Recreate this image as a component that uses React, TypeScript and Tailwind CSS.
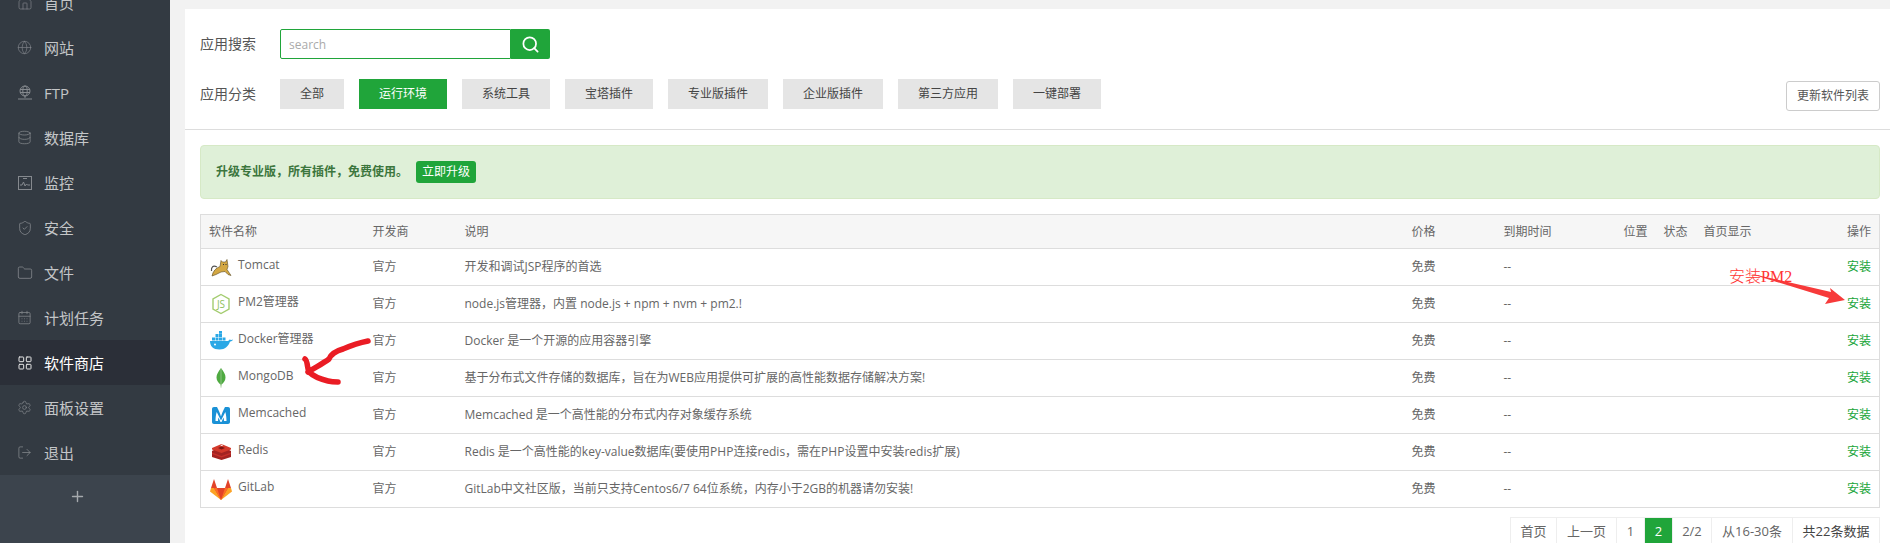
import { Home, Globe, Database, ShieldCheck, Folder, CalendarDays, LayoutGrid, Settings, LogOut, Plus, Search } from 'lucide-react'
import type { ReactNode } from 'react'

const FtpIcon = () => (
    <svg width="16" height="16" viewBox="0 0 16 16" fill="none" stroke="currentColor" strokeWidth="1">
        <circle cx="8" cy="6" r="5" />
        <ellipse cx="8" cy="6" rx="2.2" ry="5" />
        <path d="M3 4.500h10M3 7.500h10M8 11v2M1 14h14" />
    </svg>
)

const MonitorIcon = () => (
    <svg width="16" height="16" viewBox="0 0 16 16" fill="none" stroke="currentColor" strokeWidth="1">
        <rect x="1.500" y="1.500" width="13" height="13" />
        <path d="M3 10h2l1.500-3 1.500 4 1.500-2 1 1H13M6 3.500h4" />
    </svg>
)

const menu: { label: string; icon: ReactNode; active?: boolean }[] = [
    { label: '首页', icon: <Home size={16} strokeWidth={1} /> },
    { label: '网站', icon: <Globe size={15} strokeWidth={1} /> },
    { label: 'FTP', icon: <FtpIcon /> },
    { label: '数据库', icon: <Database size={15} strokeWidth={1.2} /> },
    { label: '监控', icon: <MonitorIcon /> },
    { label: '安全', icon: <ShieldCheck size={16} strokeWidth={1.2} /> },
    { label: '文件', icon: <Folder size={16} strokeWidth={1.2} /> },
    { label: '计划任务', icon: <CalendarDays size={15} strokeWidth={1.2} /> },
    { label: '软件商店', icon: <LayoutGrid size={16} strokeWidth={1.5} />, active: true },
    { label: '面板设置', icon: <Settings size={15} strokeWidth={1.1} /> },
    { label: '退出', icon: <LogOut size={15} strokeWidth={1.2} /> },
]

const categories = [
    { label: '全部' },
    { label: '运行环境', active: true },
    { label: '系统工具' },
    { label: '宝塔插件' },
    { label: '专业版插件' },
    { label: '企业版插件' },
    { label: '第三方应用' },
    { label: '一键部署' },
]

const TomcatLogo = () => (
    <svg width="22" height="22" viewBox="0 0 22 22">
        <path d="M7 11C3 9 1 11 1.500 15" fill="none" stroke="#555" strokeWidth="1.200" />
        <path d="M2 20c1-5 4-8 8-9.500l1-6 1.500 1.500h3L17 3.500l1 7-1 3 4 6-3-1-3-3-4 .5-5 2.500z" fill="#d4a843" stroke="#5a4a22" strokeWidth=".6" />
        <path d="M13 8.500h1M15.500 8.500h1" stroke="#333" strokeWidth="1" />
    </svg>
)

const NodeLogo = () => (
    <svg width="20" height="22" viewBox="0 0 20 22">
        <path d="M10 1.500l8 4.500v10l-8 4.500L2 16V6z" fill="none" stroke="#a3cc6f" strokeWidth="1.400" />
        <text x="10" y="15" textAnchor="middle" fontSize="10" fill="#8fbf5c">JS</text>
    </svg>
)

const DockerLogo = () => (
    <svg width="24" height="20" viewBox="0 0 24 20">
        <path d="M1 10h17c1 0 2-.5 2.500-1.500 1 .5 2.500.5 3.500 0-.5 1.500-2 2-3 2-1.500 4.500-5 8-10.500 8C4 18.500 1 15 1 10z" fill="#2aa8e6" />
        <path d="M3 6.500h3v3H3zM6.500 6.500h3v3h-3zM10 6.500h3v3h-3zM13.500 6.500h3v3h-3zM6.500 3h3v3h-3zM10 3h3v3h-3zM10 0h3v2.700h-3z" fill="#2aa8e6" />
        <circle cx="6" cy="13.500" r="1" fill="#fff" />
    </svg>
)

const MongoLogo = () => (
    <svg width="12" height="22" viewBox="0 0 12 22">
        <path d="M6 1c3 4 4.500 6.500 4.500 9.500S8.500 16 6.500 17.500L6 21l-.5-3.500C3.500 16 1.500 13.500 1.500 10.500S3 5 6 1z" fill="#4faa41" />
        <path d="M6 2v19" stroke="#c9d8c0" strokeWidth=".5" />
    </svg>
)

const MemcachedLogo = () => (
    <svg width="18" height="17" viewBox="0 0 18 17">
        <path d="M2 0h3c1.500 3 3 6 4 9.500C10 6 11.500 3 13 0h3c1.200 0 2 .8 2 2v13c0 1.200-.8 2-2 2H2c-1.200 0-2-.8-2-2V2C0 .8.800 0 2 0z" fill="#1a91d6" />
        <path d="M3.500 14c0-3 .3-6 1.200-9L9 13.500 13.300 5c.9 3 1.200 6 1.200 9h-2.500c0-1.500-.2-2.500-.5-3.500L9.500 15h-1L6.500 10.500c-.3 1-.5 2-.5 3.500z" fill="#fff" />
    </svg>
)

const RedisLogo = () => (
    <svg width="19" height="16" viewBox="0 0 19 16">
        <path d="M9.500 6L19 10v3l-9.500 3L0 13v-3z" fill="#a32422" />
        <path d="M9.500 3.500L19 7v3l-9.500 3.500L0 10V7z" fill="#c6302b" />
        <path d="M9.500 3.500L19 7v1.500L9.500 12 0 8.500V7z" fill="#a32422" />
        <path d="M9.500 0L19 4v1.500L9.500 9 0 5.500V4z" fill="#d33a2c" />
        <path d="M6 4l3.500-1.500L13 4 9.500 5.500z" fill="#7a1512" />
        <path d="M8.500 1l2-.5.500 1-2 .5z" fill="#fff" />
    </svg>
)

const GitLabLogo = () => (
    <svg width="22" height="21" viewBox="0 0 22 21">
        <path d="M11 21L0 12.500 1 9h20l1 3.500z" fill="#fca326" />
        <path d="M11 21L4 9h14z" fill="#e24329" />
        <path d="M11 21L7 9H4z" fill="#fc6d26" />
        <path d="M11 21l4-12h3z" fill="#fc6d26" />
        <path d="M4 0l3 9H1zM18 0l3 9h-6z" fill="#e24329" />
    </svg>
)

const rows = [
    { name: 'Tomcat', logo: <TomcatLogo />, desc: '开发和调试JSP程序的首选' },
    { name: 'PM2管理器', logo: <NodeLogo />, desc: 'node.js管理器，内置 node.js + npm + nvm + pm2.!' },
    { name: 'Docker管理器', logo: <DockerLogo />, desc: 'Docker 是一个开源的应用容器引擎' },
    { name: 'MongoDB', logo: <MongoLogo />, desc: '基于分布式文件存储的数据库，旨在为WEB应用提供可扩展的高性能数据存储解决方案!' },
    { name: 'Memcached', logo: <MemcachedLogo />, desc: 'Memcached 是一个高性能的分布式内存对象缓存系统' },
    { name: 'Redis', logo: <RedisLogo />, desc: 'Redis 是一个高性能的key-value数据库(要使用PHP连接redis，需在PHP设置中安装redis扩展)' },
    { name: 'GitLab', logo: <GitLabLogo />, desc: 'GitLab中文社区版，当前只支持Centos6/7 64位系统，内存小于2GB的机器请勿安装!' },
]

const headers = ['软件名称', '开发商', '说明', '价格', '到期时间', '位置', '状态', '首页显示']

const pager = [
    { label: '首页', w: 'w-[47px]' },
    { label: '上一页', w: 'w-[60px]' },
    { label: '1', w: 'w-[28px]' },
    { label: '2', w: 'w-[28px]', active: true },
    { label: '2/2', w: 'w-[39px]' },
    { label: '从16-30条', w: 'w-[81px]' },
    { label: '共22条数据', w: 'w-[87px]', dark: true },
]

const App = () => {
    return (
        <div className="relative flex h-[543px] w-[1890px] overflow-hidden bg-[#f2f2f2] font-['Open_Sans','Noto_Sans_CJK_SC',sans-serif] text-xs text-[#666]">
            {/* Sidebar */}
            <div className="flex w-[170px] shrink-0 flex-col bg-[#3c444d]">
                <div className="-mt-[20px] bg-[#333a42]">
                    {menu.map((item) => (
                        <div
                            key={item.label}
                            className={`flex h-[45px] items-center pl-[17px] text-[15px] ${item.active ? 'bg-[#2b2f38] text-white' : 'text-[#c4c6c8]'}`}
                        >
                            <span className={`flex w-[27px] shrink-0 ${item.active ? 'text-[#e4e4e4]' : 'text-[#85898e]'}`}>{item.icon}</span>
                            {item.label}
                        </div>
                    ))}
                </div>
                <div className="flex h-[43px] items-center pl-[69px] text-[#a5a9ad]">
                    <Plus size={17} strokeWidth={2} />
                </div>
            </div>

            {/* Main */}
            <div className="flex-1 pl-[15px] pt-[9px]">
                <div className="h-full bg-white">
                    <div className="border-b border-[#ddd] pb-[18px] pl-[15px] pr-[10px] pt-[20px]">
                        <div className="flex h-[30px] items-center">
                            <span className="w-[80px] text-[14px] text-[#555]">应用搜索</span>
                            <div className="flex h-[30px] w-[231px] items-center rounded-l-[2px] border border-[#20a53a] pl-[8px] pt-[1px] text-[#aaa]">search</div>
                            <div className="flex h-[30px] w-[39px] items-center justify-center rounded-r-[2px] bg-[#20a53a] text-white">
                                <Search size={19} strokeWidth={2.2} />
                            </div>
                        </div>
                        <div className="mt-[20px] flex items-start">
                            <span className="flex h-[30px] w-[80px] items-center text-[14px] text-[#555]">应用分类</span>
                            <div className="flex flex-1 gap-[15px]">
                                {categories.map((cat) => (
                                    <div
                                        key={cat.label}
                                        className={`flex h-[30px] items-center px-5 ${cat.active ? 'bg-[#20a53a] text-white' : 'bg-[#e5e5e5] text-[#444]'}`}
                                    >
                                        {cat.label}
                                    </div>
                                ))}
                            </div>
                            <div className="mt-[2px] flex h-[30px] w-[94px] items-center justify-center rounded-[3px] border border-[#ccc] text-[#555]">更新软件列表</div>
                        </div>
                    </div>

                    <div className="pl-[15px] pr-[10px] pt-[15px]">
                        <div className="flex h-[54px] items-center rounded-[4px] border border-[#d6e9c6] bg-[#dff0d8] pl-[15px] font-bold text-[#3c763d]">
                            升级专业版，所有插件，免费使用。
                            <span className="ml-[8px] flex h-[22px] w-[60px] items-center justify-center rounded-[3px] bg-[#20a53a] font-normal text-white">立即升级</span>
                        </div>

                        <table className="mt-[15px] w-full table-fixed border-collapse border border-[#ddd]">
                            <colgroup>
                                <col className="w-[164px]" />
                                <col className="w-[92px]" />
                                <col />
                                <col className="w-[92px]" />
                                <col className="w-[120px]" />
                                <col className="w-[40px]" />
                                <col className="w-[40px]" />
                                <col className="w-[80px]" />
                                <col className="w-[104px]" />
                            </colgroup>
                            <thead>
                                <tr className="h-[34px] bg-[#f6f6f6] text-left">
                                    {headers.map((h) => (
                                        <th key={h} className="px-2 font-normal">{h}</th>
                                    ))}
                                    <th className="px-2 text-right font-normal">操作</th>
                                </tr>
                            </thead>
                            <tbody>
                                {rows.map((row) => (
                                    <tr key={row.name} className="h-[37px] border-t border-[#ddd]">
                                        <td className="pl-[8px]">
                                            <div className="flex items-center">
                                                <span className="flex w-[29px] justify-center pr-[5px]">{row.logo}</span>
                                                <span className="pb-[4px]">{row.name}</span>
                                            </div>
                                        </td>
                                        <td className="px-2">官方</td>
                                        <td className="px-2">{row.desc}</td>
                                        <td className="px-2">免费</td>
                                        <td className="px-2">--</td>
                                        <td />
                                        <td />
                                        <td />
                                        <td className="px-2 text-right text-[#20a53a]">安装</td>
                                    </tr>
                                ))}
                            </tbody>
                        </table>

                        <div className="mt-[9px] flex justify-end text-[13px]">
                            {pager.map((p) => (
                                <div
                                    key={p.label}
                                    className={`flex h-[30px] items-center justify-center border-y border-r border-[#eee] first:border-l ${p.w} ${p.active ? 'bg-[#20a53a] text-white' : p.dark ? 'text-[#444]' : 'text-[#666]'}`}
                                >
                                    {p.label}
                                </div>
                            ))}
                        </div>
                    </div>
                </div>
            </div>

            {/* Hand-drawn annotations on top of the screenshot */}
            <svg className="pointer-events-none absolute left-0 top-0" width="1890" height="543" viewBox="0 0 1890 543" fill="none">
                <path
                    d="M368 341 C358 343 350 346 343 349 C336 351 331 354 329 359 C324 363 316 367 308 372 M305 359 C308 361 307 369 309 372 C313 376 320 379 328 381 C332 382 335 382 338 382"
                    stroke="#ea1c24"
                    strokeWidth="5.500"
                    strokeLinecap="round"
                    strokeLinejoin="round"
                />
                <polygon points="1748,273 1831,292 1830,288 1845,300 1825,304 1829,298" fill="#f73a3a" />
            </svg>
            <span className="absolute left-[1729px] top-[266px] font-['Liberation_Serif','Noto_Sans_CJK_SC',serif] text-[16px] font-light leading-[22px] text-[#f33]">安装PM2</span>
        </div>
    )
}

export default App
